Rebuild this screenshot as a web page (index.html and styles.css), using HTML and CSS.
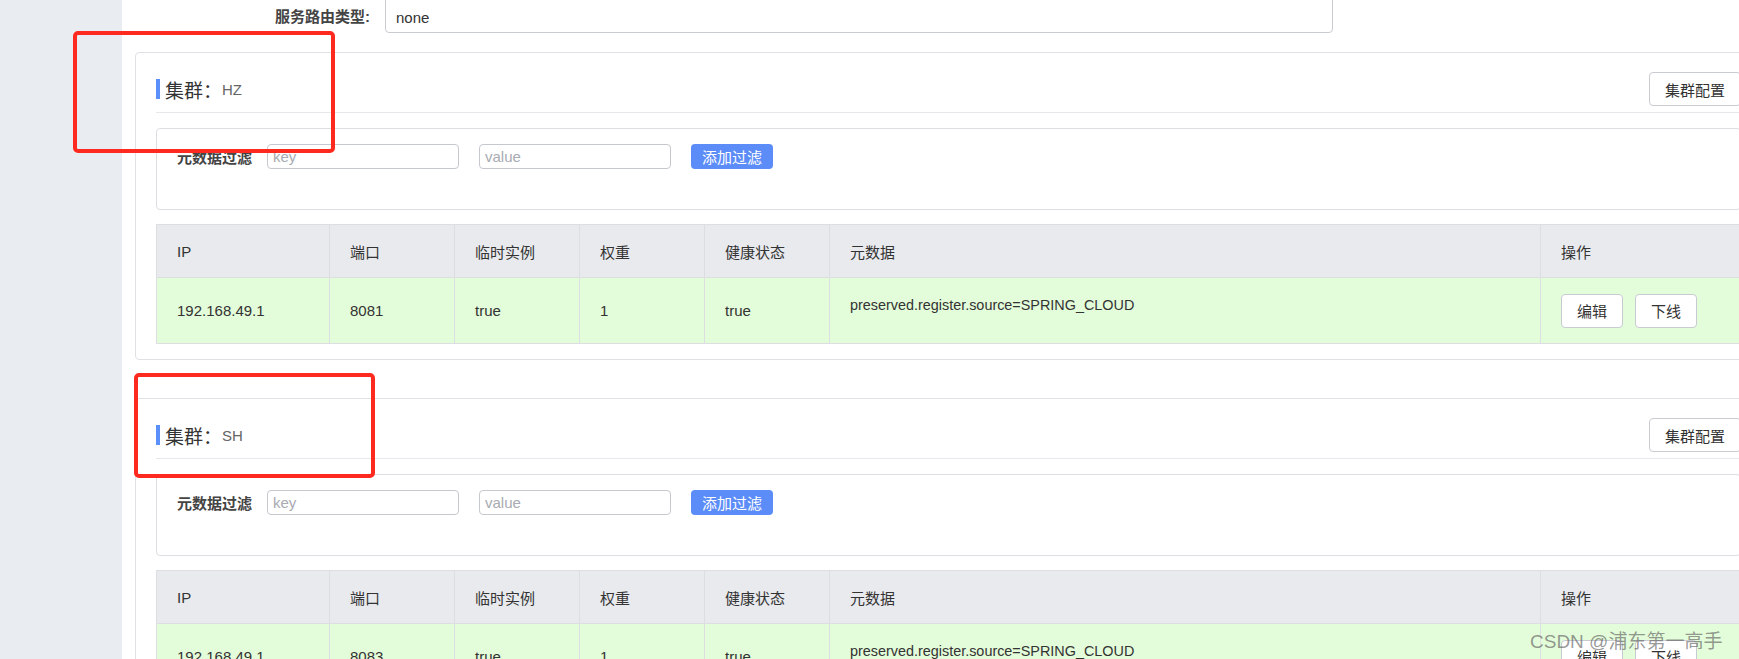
FILE: index.html
```html
<!DOCTYPE html>
<html lang="zh-CN">
<head>
<meta charset="utf-8">
<title>集群</title>
<link rel="stylesheet" href="styles.css">
</head>
<body>
<div class="page">
  <aside class="sidebar"></aside>
  <main class="main">
    <div class="form-row">
      <label class="form-label">服务路由类型:</label>
      <input class="form-input" value="none" readonly>
    </div>

    <section class="cluster">
      <div class="cluster-head">
        <div class="cluster-title"><span class="bar"></span>集群：<span class="cluster-name">HZ</span></div>
        <button class="btn">集群配置</button>
      </div>
      <div class="filter">
        <div class="filter-row">
          <span class="filter-label">元数据过滤</span>
          <input class="filter-input" placeholder="key">
          <input class="filter-input" placeholder="value">
          <button class="btn-primary">添加过滤</button>
        </div>
      </div>
      <table class="grid">
        <colgroup>
          <col class="c-ip"><col class="c-n"><col class="c-n"><col class="c-n"><col class="c-n"><col class="c-meta"><col>
        </colgroup>
        <thead>
          <tr><th>IP</th><th>端口</th><th>临时实例</th><th>权重</th><th>健康状态</th><th>元数据</th><th>操作</th></tr>
        </thead>
        <tbody>
          <tr>
            <td>192.168.49.1</td><td>8081</td><td>true</td><td>1</td><td>true</td>
            <td><div class="meta">preserved.register.source=SPRING_CLOUD</div></td>
            <td><div class="ops"><button class="btn">编辑</button><button class="btn">下线</button></div></td>
          </tr>
        </tbody>
      </table>
    </section>

    <section class="cluster">
      <div class="cluster-head">
        <div class="cluster-title"><span class="bar"></span>集群：<span class="cluster-name">SH</span></div>
        <button class="btn">集群配置</button>
      </div>
      <div class="filter">
        <div class="filter-row">
          <span class="filter-label">元数据过滤</span>
          <input class="filter-input" placeholder="key">
          <input class="filter-input" placeholder="value">
          <button class="btn-primary">添加过滤</button>
        </div>
      </div>
      <table class="grid">
        <colgroup>
          <col class="c-ip"><col class="c-n"><col class="c-n"><col class="c-n"><col class="c-n"><col class="c-meta"><col>
        </colgroup>
        <thead>
          <tr><th>IP</th><th>端口</th><th>临时实例</th><th>权重</th><th>健康状态</th><th>元数据</th><th>操作</th></tr>
        </thead>
        <tbody>
          <tr>
            <td>192.168.49.1</td><td>8083</td><td>true</td><td>1</td><td>true</td>
            <td><div class="meta">preserved.register.source=SPRING_CLOUD</div></td>
            <td><div class="ops"><button class="btn">编辑</button><button class="btn">下线</button></div></td>
          </tr>
        </tbody>
      </table>
    </section>
  </main>

  <div class="mark mark-1"></div>
  <div class="mark mark-2"></div>
  <div class="watermark">CSDN @浦东第一高手</div>
</div>
</body>
</html>
```

FILE: styles.css
```css
html, body {
  margin: 0;
  padding: 0;
  overflow: hidden;
  background: #fff;
}

body {
  font-family: "Liberation Sans", "Noto Sans CJK SC", sans-serif;
  font-size: 15px;
  color: #333;
}

.page {
  position: relative;
  display: flex;
  min-height: 100vh;
}

.sidebar {
  width: 122px;
  flex-shrink: 0;
  background: #e9ecf1;
}

.main {
  flex: 1;
  min-width: 0;
  padding-left: 13px;
}

/* top form row */
.form-row {
  display: flex;
  height: 39px;
  margin-top: -6px;
}

.form-label {
  width: 235px;
  align-self: flex-end;
  padding-bottom: 6px;
  line-height: 20px;
  text-align: right;
  font-weight: bold;
  color: #444;
  margin-right: 15px;
}

.form-input {
  width: 948px;
  height: 39px;
  box-sizing: border-box;
  border: 1px solid #c8ccd2;
  border-radius: 4px;
  padding: 8px 10px 0;
  font: inherit;
  color: #333;
  outline: none;
}

/* cluster card */
.cluster {
  width: 1627px;
  box-sizing: border-box;
  margin-top: 19px;
  border: 1px solid #dfe1e5;
  border-radius: 4px;
  padding: 19px 20px 15px;
}

.cluster + .cluster {
  margin-top: 38px;
}

.cluster-head {
  display: flex;
  justify-content: space-between;
  align-items: center;
  padding-bottom: 6px;
  border-bottom: 1px solid #e6e8eb;
}

.cluster-title {
  display: flex;
  align-items: center;
  font-size: 19px;
  color: #333;
}

.bar {
  width: 4px;
  height: 20px;
  background: #5b8ff9;
  margin-right: 5px;
}

.cluster-name {
  font-size: 15px;
  color: #666;
}

.btn {
  height: 34px;
  box-sizing: border-box;
  padding: 0 15px;
  border: 1px solid #c8ccd2;
  border-radius: 4px;
  background: #fff;
  font: inherit;
  font-size: 15px;
  color: #333;
}

/* filter panel */
.filter {
  margin-top: 15px;
  border: 1px solid #dcdee2;
  border-radius: 4px;
  padding: 15px 20px 16px;
}

.filter-row {
  display: flex;
  align-items: center;
  height: 25px;
  margin-bottom: 24px;
}

.filter-label {
  font-weight: bold;
  color: #444;
  margin-right: 15px;
}

.filter-input {
  width: 192px;
  height: 25px;
  box-sizing: border-box;
  border: 1px solid #c5c8ce;
  border-radius: 4px;
  padding: 0 5px;
  font: inherit;
  color: #333;
  margin-right: 20px;
  outline: none;
}

.filter-input::placeholder {
  color: #a8abb2;
}

.btn-primary {
  height: 25px;
  padding: 0 11px;
  border: none;
  border-radius: 4px;
  background: #5b8cf7;
  color: #fff;
  font: inherit;
}

/* table */
.grid {
  margin-top: 14px;
  width: 100%;
  border-collapse: collapse;
  table-layout: fixed;
  border: 1px solid #dcdee2;
}

.c-ip { width: 173px; }
.c-n { width: 125px; }
.c-meta { width: 711px; }

.grid th,
.grid td {
  border: 1px solid #dcdee2;
  padding: 0 20px;
  text-align: left;
  white-space: nowrap;
  overflow: hidden;
}

.grid th {
  height: 52px;
  background: #e9eaee;
  font-weight: normal;
  color: #333;
}

.grid td {
  height: 65px;
  background: #e3fcd9;
  color: #333;
}

.meta {
  padding-bottom: 12px;
  font-size: 14.4px;
}

.ops {
  display: flex;
  gap: 12px;
}

/* annotation overlays */
.mark {
  position: absolute;
  box-sizing: border-box;
  border: 4px solid #ff2a1f;
  border-radius: 5px;
}

.mark-1 {
  left: 73px;
  top: 31px;
  width: 262px;
  height: 122px;
}

.mark-2 {
  left: 134px;
  top: 373px;
  width: 241px;
  height: 105px;
}

.watermark {
  position: absolute;
  left: 1530px;
  top: 626px;
  font-size: 19px;
  color: rgba(95, 95, 95, 0.65);
  white-space: nowrap;
}
```
